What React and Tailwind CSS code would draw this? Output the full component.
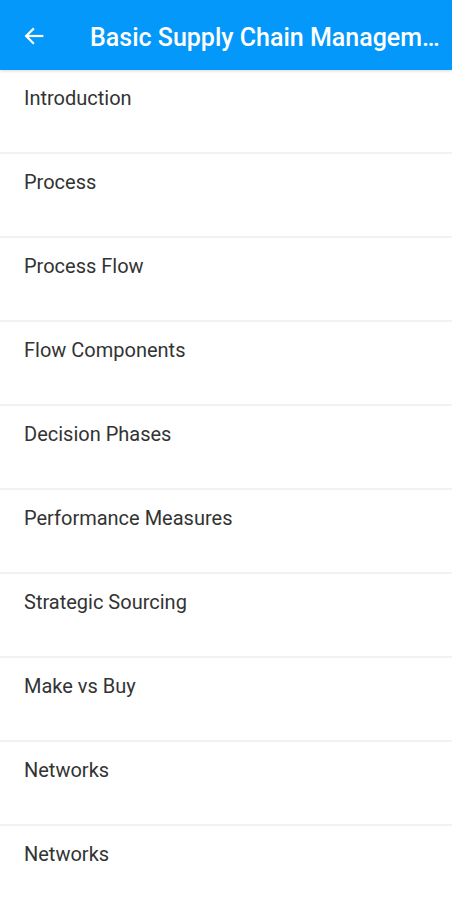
import React from "react";

const TOPICS = [
  "Introduction",
  "Process",
  "Process Flow",
  "Flow Components",
  "Decision Phases",
  "Performance Measures",
  "Strategic Sourcing",
  "Make vs Buy",
  "Networks",
  "Networks",
];

function BackArrow() {
  return (
    <svg width="22" height="22" viewBox="0 0 24 24" fill="none" stroke="white" strokeWidth="2.4" strokeLinecap="square">
      <path d="M21 12H4" />
      <path d="M11 4.5 3.5 12l7.5 7.5" />
    </svg>
  );
}

export default function App() {
  return (
    <div className="h-[900px] w-[452px] overflow-hidden bg-white font-['Roboto',sans-serif]">
      <header className="flex h-[70px] items-center bg-[#0398fa] pt-[2px] shadow-[0_1px_3px_rgba(0,0,0,0.15)]">
        <div className="flex w-[90px] shrink-0 items-center pl-[23px]">
          <BackArrow />
        </div>
        <h1 className="mt-[3px] min-w-0 truncate pr-[10px] text-[25px] leading-[28px] font-medium text-white">
          Basic Supply Chain Management
        </h1>
      </header>
      <ul>
        {TOPICS.map((t, i) => (
          <li
            key={i}
            className="h-[84px] border-b-[2px] border-[#f2f2f2] px-[24px] pt-[16px] text-[20px] leading-[24px] text-[#333333]"
          >
            {t}
          </li>
        ))}
      </ul>
    </div>
  );
}
